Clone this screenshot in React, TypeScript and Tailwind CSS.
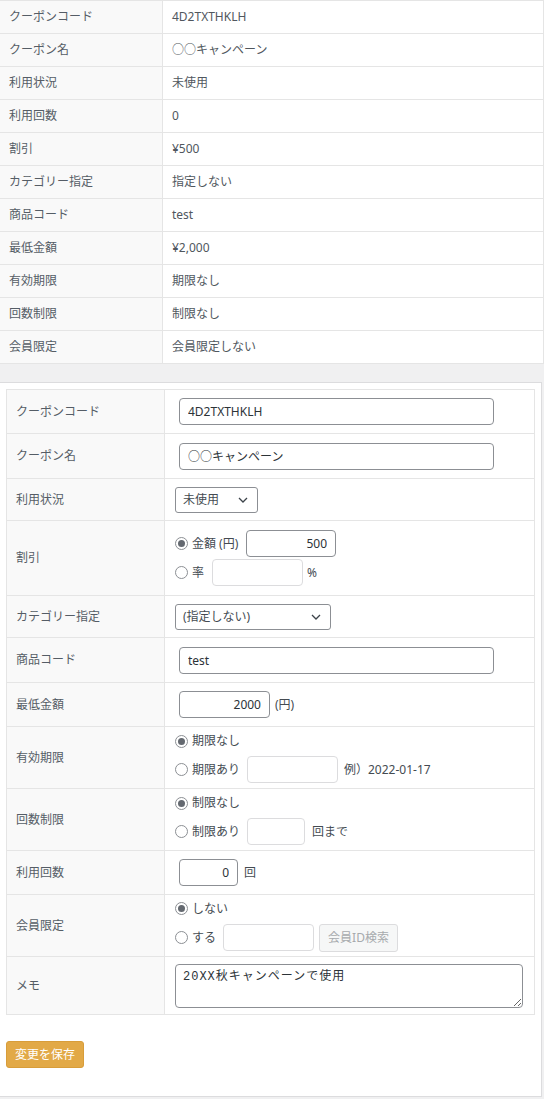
import React from "react";

const topRows: [string, string][] = [
  ["クーポンコード", "4D2TXTHKLH"],
  ["クーポン名", "○○キャンペーン"],
  ["利用状況", "未使用"],
  ["利用回数", "0"],
  ["割引", "¥500"],
  ["カテゴリー指定", "指定しない"],
  ["商品コード", "test"],
  ["最低金額", "¥2,000"],
  ["有効期限", "期限なし"],
  ["回数制限", "制限なし"],
  ["会員限定", "会員限定しない"],
];

function Radio({ checked }: { checked?: boolean }) {
  return (
    <span className="w-[13px] h-[13px] rounded-full border border-[#8c8f94] bg-white flex items-center justify-center shrink-0">
      {checked && <span className="w-[7px] h-[7px] rounded-full bg-[#646970]" />}
    </span>
  );
}

function Chevron() {
  return (
    <svg width="10" height="6" viewBox="0 0 10 6" className="shrink-0">
      <path d="M1 1l4 4 4-4" fill="none" stroke="#3c434a" strokeWidth="1.3" />
    </svg>
  );
}

function Row({ label, h, children, last }: { label: string; h: string; children: React.ReactNode; last?: boolean }) {
  return (
    <div className={`flex ${h} ${last ? "" : "border-b border-[#e5e5e5]"}`}>
      <div className="w-[158px] shrink-0 bg-[#f9f9f9] border-r border-[#e5e5e5] flex items-center pl-[9px] text-[12px] text-[#555d66]">
        {label}
      </div>
      <div className="flex-1 flex flex-col justify-center pl-[10px] text-[12px] text-[#444b52]">{children}</div>
    </div>
  );
}

const inputCls =
  "h-[27px] border border-[#8c8f94] rounded-[4px] bg-white px-[8px] text-[12px] text-[#2c3338] outline-none";
const inputLight =
  "h-[27px] border border-[#dcdcde] rounded-[4px] bg-white px-[8px] text-[12px] text-[#2c3338] outline-none";

export default function App() {
  return (
    <div className="w-[544px] min-h-[1099px] bg-[#f0f0f1] font-['Noto_Sans','Noto_Sans_CJK_JP',sans-serif]">
      {/* summary table */}
      <div className="w-[544px] bg-white border-t border-r border-[#e5e5e5]">
        {topRows.map(([k, v]) => (
          <div key={k} className="flex h-[33px] border-b border-[#e5e5e5]">
            <div className="w-[163px] shrink-0 bg-[#f9f9f9] border-r border-[#e5e5e5] flex items-center pl-[9px] text-[12px] text-[#555d66]">
              {k}
            </div>
            <div className="flex-1 flex items-center pl-[9px] text-[12px] text-[#50575e]">{v}</div>
          </div>
        ))}
      </div>

      {/* edit panel */}
      <div className="mt-[18px] w-[542px] bg-white border-t border-r border-b border-[#dcdcde] pl-[6px] pr-[6px] pt-[6px] pb-[28px]">
        <div className="w-[529px] border border-[#e5e5e5]">
          <Row label="クーポンコード" h="h-[44px]">
            <input readOnly value="4D2TXTHKLH" className={`${inputCls} ml-[4px] w-[315px]`} />
          </Row>
          <Row label="クーポン名" h="h-[45px]">
            <input readOnly value="○○キャンペーン" className={`${inputCls} ml-[4px] w-[315px]`} />
          </Row>
          <Row label="利用状況" h="h-[42px]">
            <div className="w-[83px] h-[26px] border border-[#8c8f94] rounded-[3px] flex items-center justify-between pl-[7px] pr-[9px] text-[12px]">
              <span>未使用</span>
              <Chevron />
            </div>
          </Row>
          <Row label="割引" h="h-[75px]">
            <div className="flex flex-col gap-[2px]">
              <div className="flex items-center h-[27px]">
                <Radio checked />
                <span className="ml-[4px] w-[54px]">金額 (円)</span>
                <input readOnly value="500" className={`${inputCls} w-[90px] text-right`} />
              </div>
              <div className="flex items-center h-[27px]">
                <Radio />
                <span className="ml-[4px] w-[20px]">率</span>
                <input readOnly value="" className={`${inputLight} w-[91px]`} />
                <span className="ml-[4px]">%</span>
              </div>
            </div>
          </Row>
          <Row label="カテゴリー指定" h="h-[42px]">
            <div className="w-[156px] h-[26px] border border-[#8c8f94] rounded-[3px] flex items-center justify-between pl-[7px] pr-[9px] text-[12px]">
              <span>(指定しない)</span>
              <Chevron />
            </div>
          </Row>
          <Row label="商品コード" h="h-[45px]">
            <input readOnly value="test" className={`${inputCls} ml-[4px] w-[315px]`} />
          </Row>
          <Row label="最低金額" h="h-[44px]">
            <div className="flex items-center">
              <input readOnly value="2000" className={`${inputCls} ml-[4px] w-[91px] text-right`} />
              <span className="ml-[5px]">(円)</span>
            </div>
          </Row>
          <Row label="有効期限" h="h-[62px]">
            <div className="flex flex-col">
              <div className="flex items-center h-[18px] mb-[6px]">
                <Radio checked />
                <span className="ml-[4px]">期限なし</span>
              </div>
              <div className="flex items-center h-[27px]">
                <Radio />
                <span className="ml-[4px] w-[55px]">期限あり</span>
                <input readOnly value="" className={`${inputLight} w-[91px]`} />
                <span className="ml-[6px]">例）2022-01-17</span>
              </div>
            </div>
          </Row>
          <Row label="回数制限" h="h-[62px]">
            <div className="flex flex-col">
              <div className="flex items-center h-[18px] mb-[6px]">
                <Radio checked />
                <span className="ml-[4px]">制限なし</span>
              </div>
              <div className="flex items-center h-[27px]">
                <Radio />
                <span className="ml-[4px] w-[55px]">制限あり</span>
                <input readOnly value="" className={`${inputLight} w-[58px]`} />
                <span className="ml-[7px]">回まで</span>
              </div>
            </div>
          </Row>
          <Row label="利用回数" h="h-[44px]">
            <div className="flex items-center">
              <input readOnly value="0" className={`${inputCls} ml-[4px] w-[59px] text-right`} />
              <span className="ml-[6px]">回</span>
            </div>
          </Row>
          <Row label="会員限定" h="h-[62px]">
            <div className="flex flex-col">
              <div className="flex items-center h-[18px] mb-[6px]">
                <Radio checked />
                <span className="ml-[4px]">しない</span>
              </div>
              <div className="flex items-center h-[28px]">
                <Radio />
                <span className="ml-[4px] w-[31px]">する</span>
                <input readOnly value="" className={`${inputLight} w-[91px]`} />
                <span className="ml-[5px] w-[79px] h-[28px] border border-[#dcdcde] rounded-[3px] bg-[#f6f7f7] text-[#a7aaad] flex items-center justify-center text-[12px]">
                  会員ID検索
                </span>
              </div>
            </div>
          </Row>
          <Row label="メモ" h="h-[57px]" last>
            <textarea
              readOnly
              value="20XX秋キャンペーンで使用"
              className="w-[348px] h-[44px] border border-[#8c8f94] rounded-[4px] px-[7px] py-[4px] text-[12px] leading-[16px] tracking-[1px] text-[#2c3338] font-['Liberation_Mono','Noto_Sans_CJK_JP',monospace] outline-none"
            />
          </Row>
        </div>
        <button className="mt-[26px] w-[78px] h-[27px] rounded-[3px] bg-[#e2a947] border border-[#d89d3a] text-white text-[12px] flex items-center justify-center">
          変更を保存
        </button>
      </div>
    </div>
  );
}
